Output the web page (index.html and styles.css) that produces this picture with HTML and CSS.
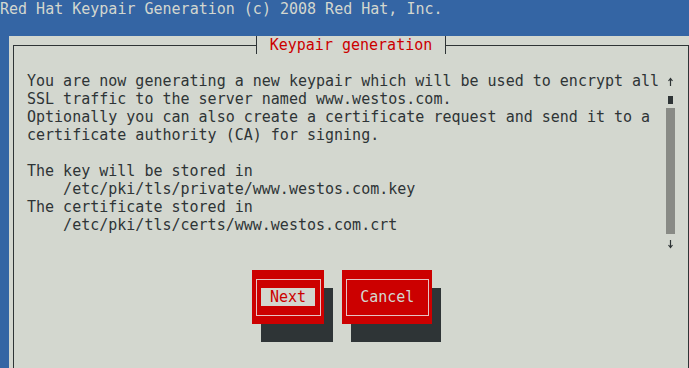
FILE: index.html
```html
<!DOCTYPE html>
<html lang="en">
<head>
  <meta charset="UTF-8" />
  <title>Keypair generation</title>
  <link rel="stylesheet" href="styles.css">
</head>
<body>
  <div class="screen">
    <div class="titlebar">Red Hat Keypair Generation (c) 2008 Red Hat, Inc.</div>

    <div class="window">
      <div class="frame">
        <div class="frame-head">
          <div class="frame-title">Keypair generation</div>
        </div>

        <div class="frame-body">
          <div class="message">You are now generating a new keypair which will be used to encrypt all
SSL traffic to the server named www.westos.com.
Optionally you can also create a certificate request and send it to a
certificate authority (CA) for signing.

The key will be stored in
    /etc/pki/tls/private/www.westos.com.key
The certificate stored in
    /etc/pki/tls/certs/www.westos.com.crt</div>

          <div class="scrollbar">
            <div class="scroll-arrow">
              <svg width="9" height="18" viewBox="0 0 9 18">
                <path d="M4.5 6.5 V14 M2.5 9 L4.5 6.5 L6.5 9" fill="none" stroke="#2e3436" stroke-width="1.2" />
              </svg>
            </div>
            <div class="scroll-thumb"><span></span></div>
            <div class="scroll-trough"></div>
            <div class="scroll-arrow">
              <svg width="9" height="18" viewBox="0 0 9 18">
                <path d="M4.5 6 V13.5 M2.5 11 L4.5 13.5 L6.5 11" fill="none" stroke="#2e3436" stroke-width="1.2" />
              </svg>
            </div>
          </div>
        </div>

        <div class="buttons">
          <div class="button focused">
            <div class="button-inner"><span class="button-label">Next</span></div>
          </div>
          <div class="button">
            <div class="button-inner"><span class="button-label">Cancel</span></div>
          </div>
        </div>
      </div>
    </div>
  </div>
</body>
</html>
```

FILE: styles.css
```css
body {
  margin: 0;
  padding: 0;
  background: #3465a4;
  font-family: "DejaVu Sans Mono", "Liberation Mono", monospace;
  font-size: 15px;
  line-height: 18px;
  color: #2e3436;
}

.screen {
  width: 689px;
  height: 368px;
  overflow: hidden;
  display: flex;
  flex-direction: column;
}

.titlebar {
  height: 18px;
  color: #d3d7cf;
  white-space: pre;
}

.window {
  flex: 1;
  margin: 18px 0 0 9px;
  padding: 9px 0 0 4px;
  background: #d3d7cf;
}

.frame {
  width: 674px;
  height: 400px;
  border: 1px solid #2e3436;
  border-bottom: none;
}

.frame-head {
  display: flex;
  justify-content: center;
  margin-top: -10px;
}

.frame-title {
  height: 18px;
  padding: 0 13px;
  background: #d3d7cf;
  border-left: 1px solid #2e3436;
  border-right: 1px solid #2e3436;
  color: #cc0000;
}

.frame-body {
  display: flex;
  margin-top: 18px;
}

.message {
  flex: 1;
  padding-left: 13px;
  white-space: pre;
}

.scrollbar {
  width: 9px;
  margin-right: 13px;
  display: flex;
  flex-direction: column;
}

.scroll-arrow {
  height: 18px;
}

.scroll-arrow svg {
  display: block;
}

.scroll-thumb {
  height: 18px;
}

.scroll-thumb span {
  display: block;
  width: 5px;
  height: 8px;
  margin: 6px 0 0 2px;
  background: #2e3436;
}

.scroll-trough {
  height: 126px;
  background: #888a85;
}

.buttons {
  display: flex;
  gap: 18px;
  margin-top: 18px;
  padding-left: 238px;
}

.button {
  padding: 9px 3px 8px 4px;
  background: #cc0000;
  box-shadow: 9px 18px 0 #2e3436;
}

.button-inner {
  padding: 8px 5px 9px 4px;
  border: 1px solid #e6c4c4;
}

.button-label {
  display: block;
  height: 18px;
  padding: 0 9px;
  color: #d3d7cf;
  white-space: pre;
}

.focused .button-label {
  background: #d3d7cf;
  color: #cc0000;
}
```
